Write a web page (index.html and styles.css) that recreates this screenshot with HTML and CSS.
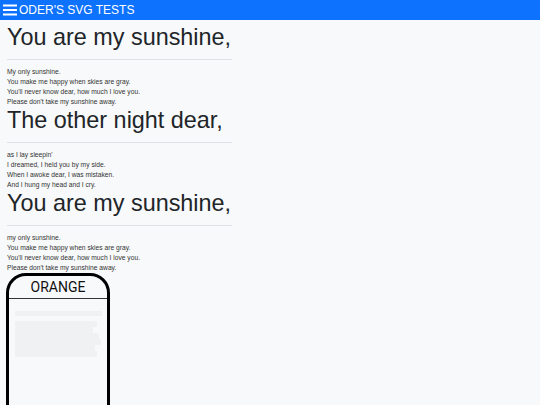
FILE: index.html
```html
<!DOCTYPE html>
<html>
<head>
<meta charset="utf-8">
<link rel="stylesheet" href="styles.css">
</head>
<body>
<header class="topbar">
  <svg class="burger" width="14" height="12" viewBox="0 0 14 12"><rect x="0" y="0.5" width="14" height="2" fill="#fff"/><rect x="0" y="5" width="14" height="2" fill="#fff"/><rect x="0" y="9.5" width="14" height="2" fill="#fff"/></svg>
  <span class="brand">ODER'S SVG TESTS</span>
</header>
<main class="content">
  <section class="verse">
    <h1 class="title">You are my sunshine,</h1>
    <hr class="rule">
    <p class="lines">My only sunshine.<br>You make me happy when skies are gray.<br>You'll never know dear, how much I love you.<br>Please don't take my sunshine away.</p>
  </section>
  <section class="verse">
    <h1 class="title">The other night dear,</h1>
    <hr class="rule">
    <p class="lines">as I lay sleepin'<br>I dreamed, I held you by my side.<br>When I awoke dear, I was mistaken.<br>And I hung my head and I cry.</p>
  </section>
  <section class="verse">
    <h1 class="title">You are my sunshine,</h1>
    <hr class="rule">
    <p class="lines">my only sunshine.<br>You make me happy when skies are gray.<br>You'll never know dear, how much I love you.<br>Please don't take my sunshine away.</p>
  </section>
  <div class="card">
    <div class="card-title">ORANGE</div>
    <div class="card-body">
      <div class="ghost ghost-bar"></div>
      <div class="ghost-block">
        <div class="ghost ghost-line" style="width:82px"></div>
        <div class="ghost ghost-line" style="width:78px"></div>
        <div class="ghost ghost-line" style="width:84px"></div>
        <div class="ghost ghost-line" style="width:86px"></div>
        <div class="ghost ghost-line" style="width:80px"></div>
        <div class="ghost ghost-line" style="width:82px"></div>
      </div>
    </div>
  </div>
</main>
</body>
</html>
```
FILE: styles.css
```css
html, body {
  margin: 0;
  padding: 0;
  background: #f8f9fa;
  font-family: "Liberation Sans", Arial, sans-serif;
  color: #212529;
  overflow: hidden;
}
.topbar {
  height: 20px;
  background: #0d72fd;
  display: flex;
  align-items: center;
  padding-left: 3px;
  gap: 2px;
}
.burger {
  display: block;
}
.brand {
  color: #fff;
  font-size: 12px;
  line-height: 20px;
}
.content {
  padding: 3px 7px 0 7px;
  width: 225px;
}
.title {
  margin: 0;
  font-size: 23.4px;
  font-weight: normal;
  line-height: 29px;
  white-space: nowrap;
}
.rule {
  margin: 7px 0 6px 0;
  border: 0;
  border-top: 1px solid #dee2e6;
  height: 0;
}
.lines {
  margin: 0 0 -1px 0;
  padding-top: 1px;
  font-size: 6.7px;
  line-height: 10px;
  color: #333;
}
.card {
  margin: 1px 0 0 -1px;
  width: 98px;
  height: 160px;
  border: 3.5px solid #000;
  border-radius: 20px;
  background: #f8f9fa;
}
.card-title {
  font-family: Roboto, sans-serif;
  font-size: 14px;
  text-align: center;
  line-height: 22px;
  border-bottom: 1px solid #333;
  color: #111;
}
.card-body {
  padding: 12px 6px 0 6px;
}
.ghost {
  background: #f0f1f3;
}
.ghost-bar {
  height: 5px;
  width: 87px;
}
.ghost-block {
  margin-top: 5px;
  display: flex;
  flex-direction: column;
}
.ghost-line {
  height: 6px;
  border-radius: 1px;
}
```
